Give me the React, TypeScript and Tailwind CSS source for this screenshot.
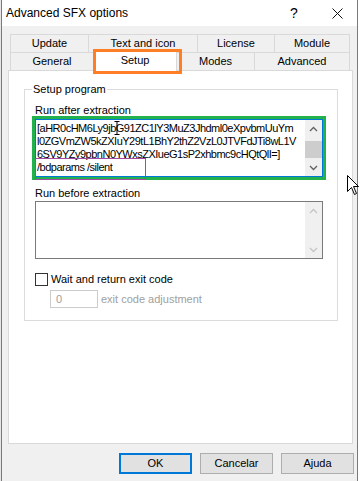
const font = "font-['Liberation_Sans',Arial,sans-serif]";

function Chevron({ up, color }: { up?: boolean; color: string }) {
  return (
    <svg width="9" height="6" viewBox="0 0 9 6">
      <polyline
        points={up ? "1,5 4.5,1.5 8,5" : "1,1 4.5,4.5 8,1"}
        fill="none"
        stroke={color}
        strokeWidth="1.3"
      />
    </svg>
  );
}

function ScrollBar({ disabled }: { disabled?: boolean }) {
  const c = disabled ? "#c5c5c5" : "#606060";
  return (
    <div className="flex h-full w-[17px] shrink-0 flex-col bg-[#f0f0f0]">
      <div className="flex h-[17px] items-center justify-center">
        <Chevron up color={c} />
      </div>
      <div className="flex-1">
        {!disabled && <div className="mt-[4px] h-[17px] w-full bg-[#cdcdcd]" />}
      </div>
      <div className="flex h-[17px] items-center justify-center">
        <Chevron color={c} />
      </div>
    </div>
  );
}

function Tab({
  label,
  w,
  className = "",
}: {
  label: string;
  w: string;
  className?: string;
}) {
  return (
    <div
      className={`flex h-[18px] items-center justify-center border-t border-[#d9d9d9] ${w} ${className}`}
    >
      {label}
    </div>
  );
}

const lines = [
  "l0ZGVmZW5kZXIuY29tL1BhY2thZ2VzL0JTVFdJTi8wL1V",
  "6SV9YZy9pbnN0YWxsZXIueG1sP2xhbmc9cHQtQlI=]",
  "/bdparams /silent",
];

export default function App() {
  return (
    <div
      className={`relative flex h-[481px] w-[361px] overflow-hidden bg-white text-[11px] text-black ${font}`}
    >
      <div className="w-px shrink-0 bg-[#e6e6e6]" />
      <div className="flex h-full w-[357px] shrink-0 flex-col border-x border-[#7a7a7a] bg-[#f0f0f0]">
        {/* title bar */}
        <div className="flex h-[26px] shrink-0 items-center bg-white">
          <span className="pl-[4px] text-[12px]">Advanced SFX options</span>
          <div className="ml-auto flex h-full">
            <div className="flex w-[46px] items-center justify-center text-[14px]">?</div>
            <div className="flex w-[40px] items-center justify-center">
              <svg width="11" height="11" viewBox="0 0 11 11">
                <path d="M0.5 0.5 L10.5 10.5 M10.5 0.5 L0.5 10.5" stroke="#111" strokeWidth="1" />
              </svg>
            </div>
          </div>
        </div>

        {/* tabs */}
        <div className="ml-[8px] mt-[8px]">
          <div className="flex">
            <Tab label="Update" w="w-[78px]" className="border-l" />
            <Tab label="Text and icon" w="w-[109px]" className="border-l" />
            <Tab label="License" w="w-[77px]" className="border-l" />
            <Tab label="Module" w="w-[76px]" className="border-x" />
          </div>
          <div className="relative z-10 flex h-[18px]">
            <Tab label="General" w="w-[83px]" className="border-l" />
            <div className="relative -mt-[2px] flex h-[21px] w-[84px] items-center justify-center border-x border-t border-[#d9d9d9] bg-white pb-[1px]">
              Setup
              <div className="pointer-events-none absolute -left-[1px] top-[-2px] h-[25px] w-[89px] border-[3px] border-[#ff7f27]" />
            </div>
            <Tab label="Modes" w="w-[77px]" />
            <Tab label="Advanced" w="w-[96px]" className="border-x" />
          </div>
        </div>

        {/* panel */}
        <div className="ml-[6px] h-[374px] w-[345px] shrink-0 border border-[#d9d9d9] bg-white pl-[15px] pt-[18px]">
          <div className="relative h-[232px] w-[314px] border border-[#dcdcdc] pl-[10px] pt-[13px]">
            <span className="absolute -top-[7px] left-[7px] bg-white px-[1px] leading-[13px]">
              Setup program
            </span>

            <div className="h-[14px] leading-[14px]">Run after extraction</div>
            <div className="relative mt-[2px] flex h-[58px] w-[288px] border border-[#0078d7] bg-white">
              <div className="flex-1 overflow-hidden pl-[1px] pt-[2px] tracking-[-0.5px]">
                <div className="whitespace-nowrap leading-[13px]">
                  [aHR0cHM6Ly9jb
                  <span className="relative">
                    <svg
                      className="pointer-events-none absolute -left-[2px] -top-[1px]"
                      width="6"
                      height="14"
                      viewBox="0 0 6 14"
                    >
                      <path d="M0.5 0.5 H5.5 M3 0.5 V13.5 M0.5 13.5 H5.5" stroke="#000" strokeWidth="1" fill="none" />
                    </svg>
                  </span>
                  G91ZC1lY3MuZ3Jhdml0eXpvbmUuYm
                </div>
                {lines.map((l) => (
                  <div key={l} className="whitespace-nowrap leading-[13px]">
                    {l}
                  </div>
                ))}
              </div>
              <ScrollBar />
              <div className="pointer-events-none absolute -inset-[4px] border-[3px] border-[#22b14c]" />
              <div className="pointer-events-none absolute -left-[1px] top-[38px] h-[22px] w-[111px] border border-[#a349a4]" />
            </div>

            <div className="mt-[9px] h-[14px] leading-[14px]">Run before extraction</div>
            <div className="mt-[1px] flex h-[58px] w-[288px] justify-end border border-[#7a7a7a] bg-white">
              <ScrollBar disabled />
            </div>

            <div className="mt-[14px] flex h-[13px] items-center">
              <div className="h-[13px] w-[13px] border border-[#333333] bg-white" />
              <span className="ml-[3px]">Wait and return exit code</span>
            </div>
            <div className="mt-[4px] flex items-center">
              <div className="ml-[15px] flex h-[18px] w-[48px] items-center border border-[#cccccc] pl-[5px] text-[#a0a0a0]">
                0
              </div>
              <span className="ml-[3px] text-[#a0a0a0]">exit code adjustment</span>
            </div>
          </div>
        </div>

        {/* buttons */}
        <div className="mt-[9px] flex justify-end gap-[8px] pr-[3px]">
          <button className="h-[21px] w-[73px] border-2 border-[#0078d7] bg-[#e1e1e1]">OK</button>
          <button className="h-[21px] w-[73px] border border-[#adadad] bg-[#e1e1e1]">Cancelar</button>
          <button className="h-[21px] w-[73px] border border-[#adadad] bg-[#e1e1e1]">Ajuda</button>
        </div>
      </div>
      <div className="flex-1 bg-white" />

      {/* mouse pointer */}
      <svg
        className="pointer-events-none absolute left-[347px] top-[175px]"
        width="13"
        height="21"
        viewBox="0 0 13 21"
      >
        <path
          d="M0.5 0.5 V16.5 L4.5 12.5 L7.5 19.5 L9.5 18.5 L6.5 11.5 H11.5 Z"
          fill="#fff"
          stroke="#000"
          strokeWidth="1"
          strokeLinejoin="miter"
        />
      </svg>
    </div>
  );
}
